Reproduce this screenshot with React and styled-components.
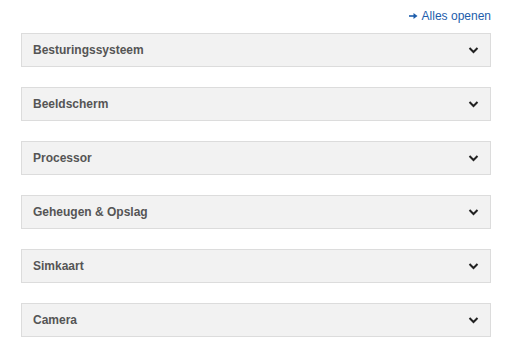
import React from 'react';
import styled, { createGlobalStyle } from 'styled-components';

const GlobalStyle = createGlobalStyle`
  body {
    margin: 0;
    background: #fff;
    font-family: "Liberation Sans", Arial, sans-serif;
  }
`;

const Wrapper = styled.div`
  padding: 8px 18px 0 21px;
  display: flex;
  flex-direction: column;
`;

const Toolbar = styled.div`
  display: flex;
  justify-content: flex-end;
  height: 16px;
  margin-bottom: 9px;
`;

const OpenAll = styled.a`
  font-size: 12px;
  line-height: 16px;
  color: #1d5dab;
  text-decoration: none;
  cursor: pointer;
  display: flex;
  align-items: center;
  gap: 4px;
`;

const List = styled.div`
  display: flex;
  flex-direction: column;
  gap: 20px;
`;

const Panel = styled.button`
  display: flex;
  align-items: center;
  justify-content: space-between;
  height: 34px;
  padding: 0 11px 0 11px;
  background: #f2f2f2;
  border: 1px solid #dcdcdc;
  font-family: "Liberation Sans", Arial, sans-serif;
  font-size: 12px;
  font-weight: bold;
  color: #555;
  text-align: left;
  cursor: pointer;
`;

const Chevron = () => (
  <svg width="11" height="8" viewBox="0 0 11 8">
    <path d="M1.5 2 L5.5 6 L9.5 2" fill="none" stroke="#222" strokeWidth="2" />
  </svg>
);

const Arrow = () => (
  <svg width="9" height="8" viewBox="0 0 9 8">
    <path d="M0 4 H6" stroke="#1d5dab" strokeWidth="1.6" />
    <path d="M4.5 1 L8.5 4 L4.5 7 Z" fill="#1d5dab" />
  </svg>
);

const sections = [
  'Besturingssysteem',
  'Beeldscherm',
  'Processor',
  'Geheugen & Opslag',
  'Simkaart',
  'Camera',
];

export default function App() {
  return (
    <>
      <GlobalStyle />
      <Wrapper>
        <Toolbar>
          <OpenAll>
            <Arrow />
            Alles openen
          </OpenAll>
        </Toolbar>
        <List>
          {sections.map((s) => (
            <Panel key={s}>
              {s}
              <Chevron />
            </Panel>
          ))}
        </List>
      </Wrapper>
    </>
  );
}
